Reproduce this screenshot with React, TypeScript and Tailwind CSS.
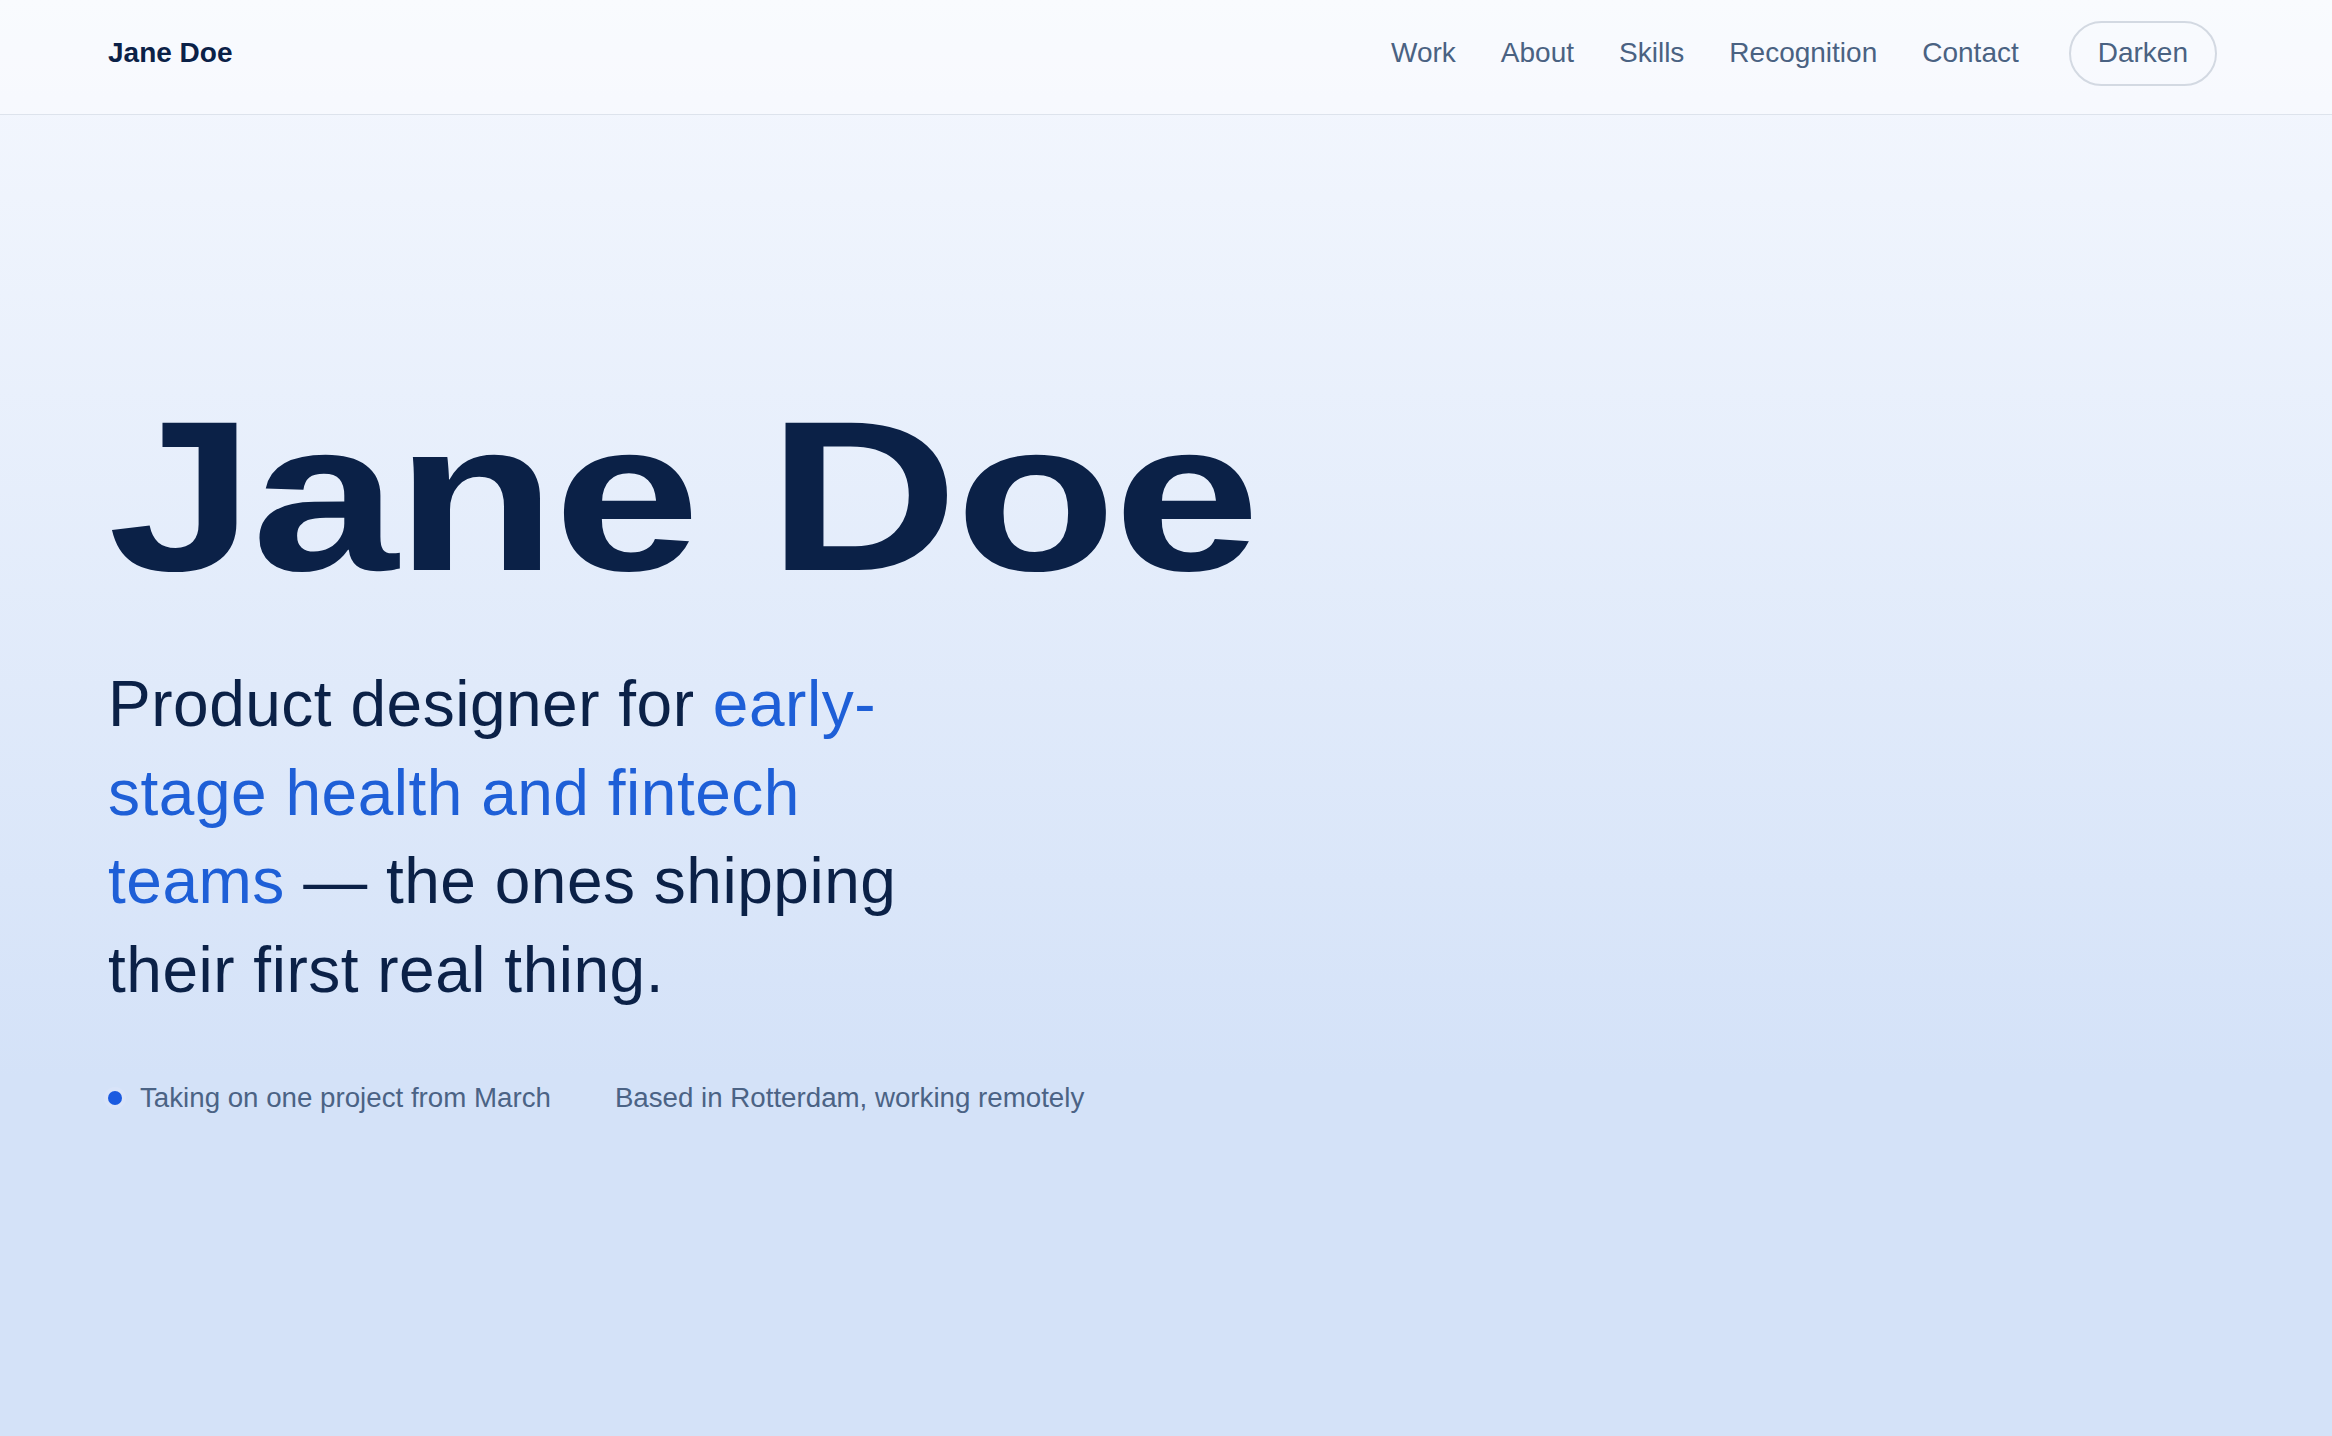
import React from "react";

const links = ["Work", "About", "Skills", "Recognition", "Contact"];

export default function App() {
  return (
    <div
      className="min-h-screen w-full bg-[linear-gradient(180deg,#f5f8fe_0%,#d4e2f8_75%,#d4e2f8_100%)] text-[#0b2147]"
      style={{ fontFamily: '"Liberation Sans", Arial, sans-serif' }}
    >
      <header className="flex h-[115px] items-center justify-between border-b border-[#dde3ec] bg-white/40 pl-[108px] pr-[115px] pb-[8px]">
        <a className="text-[28px] font-bold leading-none text-[#0b2147]">Jane Doe</a>
        <nav className="flex items-center">
          <ul className="flex items-center gap-[45px]">
            {links.map((l) => (
              <li key={l} className="text-[28px] leading-none text-[#4a6282]">
                {l}
              </li>
            ))}
          </ul>
          <button className="ml-[50px] flex h-[65px] items-center rounded-full border-2 border-[#d3d9e2] px-[27px] text-[28px] leading-none text-[#4a6282]">
            Darken
          </button>
        </nav>
      </header>

      <main className="pl-[108px] pt-[274px]">
        <h1 className="inline-block origin-left scale-x-[1.23] text-[214px] font-bold leading-none tracking-[-0.01em] text-[#0b2147]">
          Jane Doe
        </h1>

        <p className="mt-[57px] max-w-[830px] text-[64px] leading-[88.6px] tracking-[0.008em] text-[#0b2147]">
          Product designer for{" "}
          <span className="text-[#1e5fd7]">early-stage health and fintech teams</span> — the ones
          shipping their first real thing.
        </p>

        <div className="mt-[64px] flex items-center text-[27.7px] leading-[40px] text-[#4b6385]">
          <span className="mr-[18px] h-[14px] w-[14px] rounded-full bg-[#1a5ae0] shadow-[0_0_0_4px_#d9e4f9]" />
          <span>Taking on one project from March</span>
          <span className="ml-[64px]">Based in Rotterdam, working remotely</span>
        </div>
      </main>
    </div>
  );
}
